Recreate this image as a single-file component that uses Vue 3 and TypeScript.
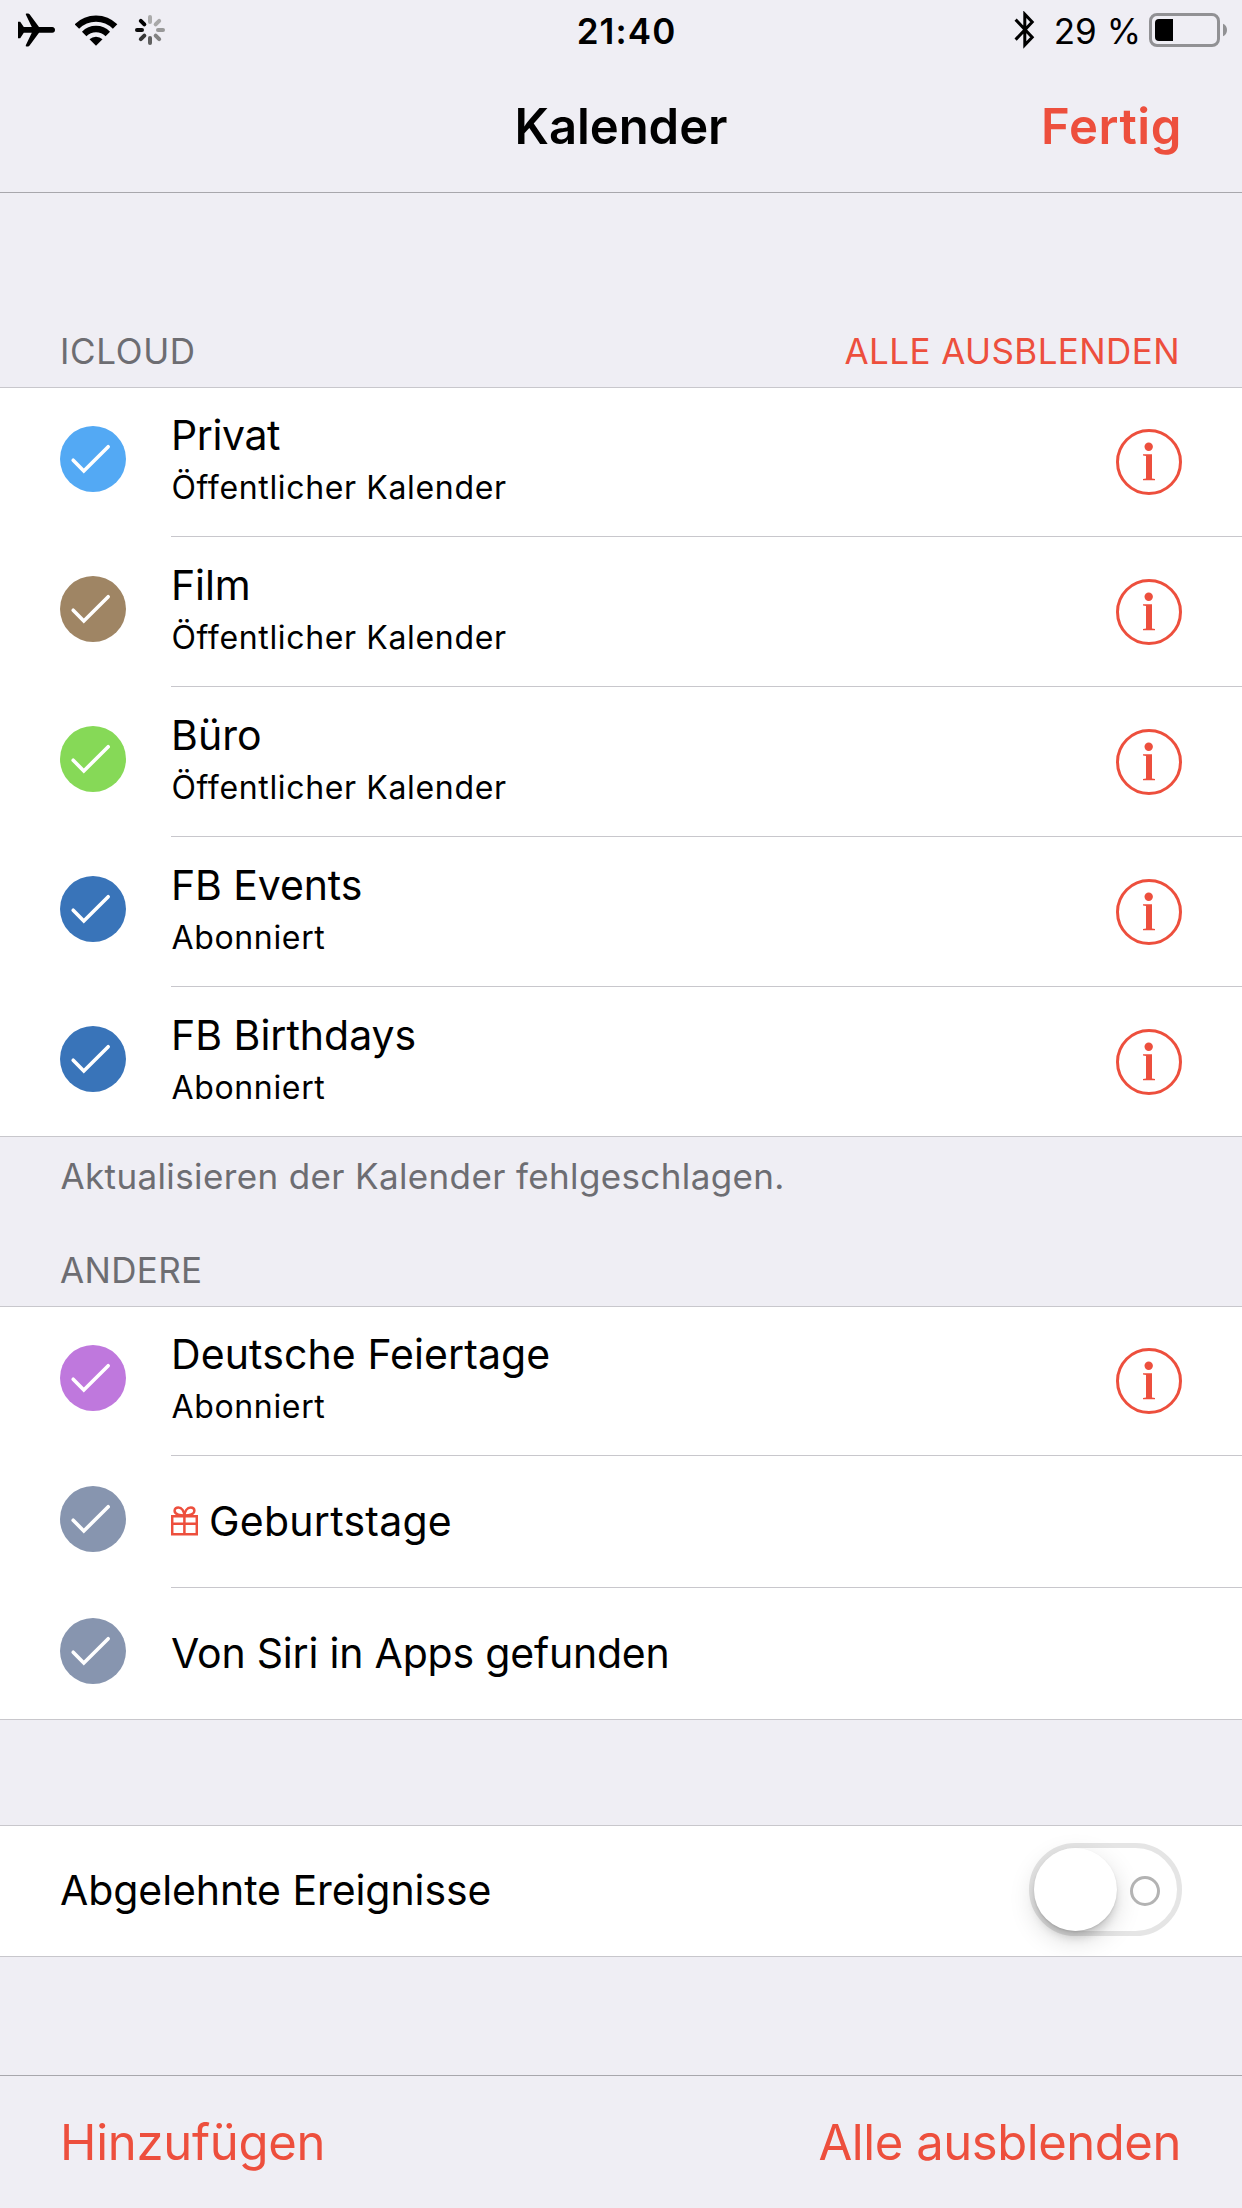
<script setup lang="ts">
import { ref } from 'vue'

interface Calendar {
  name: string
  note?: string
  color: string
  spacing: number
  gift?: boolean
}

const icloud: Calendar[] = [
  { name: 'Privat', note: 'Öffentlicher Kalender', color: '#53a9f4', spacing: -0.4 },
  { name: 'Film', note: 'Öffentlicher Kalender', color: '#9f8564', spacing: -0.1 },
  { name: 'Büro', note: 'Öffentlicher Kalender', color: '#86d957', spacing: 0.1 },
  { name: 'FB Events', note: 'Abonniert', color: '#3974b9', spacing: -0.1 },
  { name: 'FB Birthdays', note: 'Abonniert', color: '#3974b9', spacing: 0 },
]

const others: Calendar[] = [
  { name: 'Deutsche Feiertage', note: 'Abonniert', color: '#bf78dd', spacing: 0.1 },
  { name: 'Geburtstage', color: '#8795af', spacing: 0.25, gift: true },
  { name: 'Von Siri in Apps gefunden', color: '#8795af', spacing: -0.2 },
]

const sections = [
  { id: 'icloud', title: 'ICLOUD', spacing: 0.65, action: 'ALLE AUSBLENDEN', items: icloud, footer: 'Aktualisieren der Kalender fehlgeschlagen.' },
  { id: 'andere', title: 'ANDERE', spacing: 0.35, action: '', items: others, footer: '' },
]

const petals = ['#ababab', '#a8a8a8', '#999999', '#828282', '#606060', '#363636', '#0c0c0c', '#000000']

const showDeclined = ref(false)
</script>

<template>
  <div class="screen">
    <header class="top">
      <div class="status">
        <div class="status-left">
          <svg class="plane" width="37" height="34" viewBox="0 0 37 34">
            <path d="M0 8.7H2.2L5.8 14H13.8L7.8 1.6Q7.5.4 8.6.4H10Q11 .4 11.6 1.2L21 14H34.2Q37 14.4 37 16.9T34.2 19.7H21L11.6 32.6Q11 33.5 10 33.5H8.6Q7.4 33.5 7.8 32.3L13.8 19.7H5.8L2.2 25.2H0Z" />
          </svg>
          <svg class="wifi" width="43" height="31" viewBox="0 0 43 31">
            <path d="M1.9 11.6A27 27 0 0 1 40.1 11.6M9.2 18.9A16.7 16.7 0 0 1 32.8 18.9" fill="none" stroke="#000" stroke-width="6.3" />
            <path d="M21 30.8L14.5 24.3A9.4 9.4 0 0 1 27.5 24.3Z" />
          </svg>
          <svg class="spinner" width="30" height="30" viewBox="-15 -15 30 30">
            <line v-for="(c, i) in petals" :key="i" x1="0" y1="-8" x2="0" y2="-13" :stroke="c" stroke-width="4" stroke-linecap="round" :transform="`rotate(${i * 45})`" />
          </svg>
        </div>
        <div class="time">21:40</div>
        <div class="status-right">
          <svg class="bluetooth" width="21" height="38" viewBox="0 0 21 38">
            <path d="M1.6 8.6L18.2 26.2L10.8 34V3.2L18.2 11L1.6 28.6" fill="none" stroke="#000" stroke-width="3" />
          </svg>
          <span class="percent">29 %</span>
          <svg width="78" height="34" viewBox="0 0 78 34">
            <rect x="1.5" y="1.5" width="68" height="31" rx="6.5" fill="none" stroke="#919194" stroke-width="3" />
            <path d="M10 6H24V28H10Q6 28 6 24V10Q6 6 10 6Z" />
            <path d="M74 10.8Q78 12.6 78 17T74 23.2Z" fill="#919194" />
          </svg>
        </div>
      </div>
      <nav class="nav">
        <span></span>
        <h1>Kalender</h1>
        <button class="done">Fertig</button>
      </nav>
    </header>

    <main>
      <section v-for="s in sections" :key="s.id">
        <div class="section-head" :class="s.id">
          <h2 :style="{ letterSpacing: s.spacing + 'px' }">{{ s.title }}</h2>
          <button v-if="s.action" class="hide-all">{{ s.action }}</button>
        </div>
        <ul class="list">
          <li v-for="c in s.items" :key="c.name" class="row" :class="{ single: !c.note }">
            <svg class="check" width="66" height="66" viewBox="0 0 66 66">
              <circle cx="33" cy="33" r="33" :fill="c.color" />
              <path d="M13.2 34.2L23.8 45L48.2 20.7" fill="none" stroke="#fff" stroke-width="3.6" stroke-linecap="round" />
            </svg>
            <div class="cell">
              <svg v-if="c.gift" class="gift" width="27" height="30" viewBox="0 0 27 30">
                <path d="M1.2 10.2H25.8V28.2H1.2ZM1 17.8H26M13.4 10V28M13.4 9.5C10 9.5 3.6 8.8 3.6 4.8C3.6 2.4 5.4 1.4 7.3 1.4C11 1.4 13 5.5 13.4 9.5C13.8 5.5 16 1.4 19.7 1.4C21.6 1.4 23.4 2.4 23.4 4.8C23.4 8.8 17 9.5 13.4 9.5" fill="none" stroke="#ed4f3d" stroke-width="2.5" />
              </svg>
              <div class="labels">
                <div class="name" :style="{ letterSpacing: c.spacing + 'px' }">{{ c.name }}</div>
                <div v-if="c.note" class="note">{{ c.note }}</div>
              </div>
              <svg v-if="c.note" class="info" width="66" height="66" viewBox="0 0 66 66">
                <circle cx="33" cy="33" r="31.5" fill="none" stroke="#ed4f3d" stroke-width="3" />
                <circle cx="32.7" cy="17.7" r="4.2" fill="#ed4f3d" />
                <path d="M27 25.3H36V49.6L39 50V51.3H27V50L30 49.6V27L27 26.6Z" fill="#ed4f3d" />
              </svg>
            </div>
          </li>
        </ul>
        <p v-if="s.footer" class="section-foot">{{ s.footer }}</p>
      </section>

      <div class="declined">
        <span>Abgelehnte Ereignisse</span>
        <button class="switch" role="switch" :aria-checked="showDeclined" @click="showDeclined = !showDeclined">
          <span class="knob"></span>
          <span class="ring"></span>
        </button>
      </div>
    </main>

    <footer class="toolbar">
      <button class="add">Hinzufügen</button>
      <button class="all">Alle ausblenden</button>
    </footer>
  </div>
</template>

<style>
body {
  margin: 0;
  background: #efeef4;
}
</style>

<style scoped>
.screen {
  width: 1242px;
  height: 2208px;
  box-sizing: border-box;
  display: flex;
  flex-direction: column;
  background: #efeef4;
  color: #000;
  font-family: Inter, "Liberation Sans", sans-serif;
  overflow: hidden;
}
h1, h2, p, ul {
  margin: 0;
  padding: 0;
  font-weight: 400;
  list-style: none;
}
button {
  border: 0;
  padding: 0;
  background: none;
  color: #ed4f3d;
  font-family: inherit;
}
svg {
  display: block;
  flex: none;
}
.top {
  height: 193px;
  box-sizing: border-box;
  border-bottom: 1px solid #a8a7ac;
}
.status {
  height: 60px;
  display: grid;
  grid-template-columns: 1fr auto 1fr;
  align-items: center;
  font-size: 35px;
  line-height: 42px;
}
.status-left {
  display: flex;
  align-items: center;
  padding-left: 18px;
}
.wifi {
  margin-left: 20px;
}
.spinner {
  margin-left: 17px;
}
.time {
  margin: 2px 0 0 11px;
  font-weight: 600;
  letter-spacing: 1.1px;
}
.status-right {
  display: flex;
  align-items: center;
  justify-content: flex-end;
  padding-right: 15px;
}
.percent {
  margin: 2px 8px 0 19px;
  white-space: nowrap;
}
.nav {
  display: grid;
  grid-template-columns: 1fr auto 1fr;
  padding: 37px 60px 0;
  font-size: 49px;
  line-height: 59px;
}
h1 {
  font-size: 49px;
  font-weight: 600;
  letter-spacing: -0.05px;
}
.done {
  justify-self: end;
  font-size: 49px;
  font-weight: 600;
  line-height: 59px;
  letter-spacing: 0.6px;
}
.section-head {
  display: flex;
  align-items: flex-end;
  justify-content: space-between;
  box-sizing: border-box;
  height: 109px;
  padding: 0 62px 15px 60px;
}
.section-head.icloud {
  height: 194px;
}
h2, .hide-all {
  font-size: 35px;
  line-height: 42px;
}
h2 {
  color: #6d6d72;
}
.hide-all {
  letter-spacing: 0.41px;
}
.list {
  background: #fff;
  box-shadow: inset 0 1px #c8c7cc, inset 0 -1px #c8c7cc;
}
.row {
  display: flex;
  height: 150px;
  padding-left: 60px;
}
.row.single {
  height: 132px;
}
.check {
  margin-top: 39px;
}
.single .check {
  margin-top: 30px;
}
.cell {
  flex: 1;
  display: flex;
  align-items: flex-start;
  box-sizing: border-box;
  margin-left: 45px;
  padding-right: 60px;
  border-bottom: 1px solid #c8c7cc;
}
.labels {
  flex: 1;
  padding-top: 23px;
}
.single .labels {
  padding-top: 40px;
}
.name {
  font-size: 41px;
  line-height: 50px;
}
.note {
  margin: 8px 0 0 0.5px;
  font-size: 32px;
  line-height: 39px;
  letter-spacing: 0.65px;
}
.gift {
  margin: 50px 11px 0 0;
}
.info {
  margin-top: 42px;
}
.section-foot {
  padding: 18px 60.5px 0;
  font-size: 35px;
  line-height: 42px;
  letter-spacing: 0.37px;
  color: #6d6d72;
}
.declined {
  display: flex;
  align-items: flex-start;
  justify-content: space-between;
  box-sizing: border-box;
  height: 132px;
  margin-top: 105px;
  padding: 0 60px;
  overflow: hidden;
  border-top: 1px solid #c8c7cc;
  border-bottom: 1px solid #c8c7cc;
  background: #fff;
  font-size: 41px;
  line-height: 50px;
  letter-spacing: -0.07px;
}
.declined > span {
  margin-top: 39px;
}
.switch {
  display: flex;
  align-items: center;
  box-sizing: border-box;
  width: 153px;
  height: 93px;
  margin-top: 17px;
  border: 5px solid #e5e5e5;
  border-radius: 47px;
  background: #fff;
}
.knob {
  width: 83px;
  height: 83px;
  border-radius: 50%;
  background: #fff;
  box-shadow: 0 9px 26px rgba(0, 0, 0, 0.15), 0 8px 10px -2px rgba(0, 0, 0, 0.15), 0 1px 2px rgba(0, 0, 0, 0.1);
}
.ring {
  box-sizing: border-box;
  width: 30px;
  height: 30px;
  margin: 2px 0 0 13px;
  border: 3px solid #b3b3b3;
  border-radius: 50%;
}
.toolbar {
  display: flex;
  align-items: flex-start;
  justify-content: space-between;
  box-sizing: border-box;
  height: 133px;
  margin-top: auto;
  padding: 37px 61px 0 60px;
  border-top: 1px solid #a8a7ac;
}
.toolbar button {
  font-size: 49px;
  line-height: 59px;
}
.add {
  letter-spacing: -0.27px;
}
.all {
  letter-spacing: -0.44px;
}
</style>
